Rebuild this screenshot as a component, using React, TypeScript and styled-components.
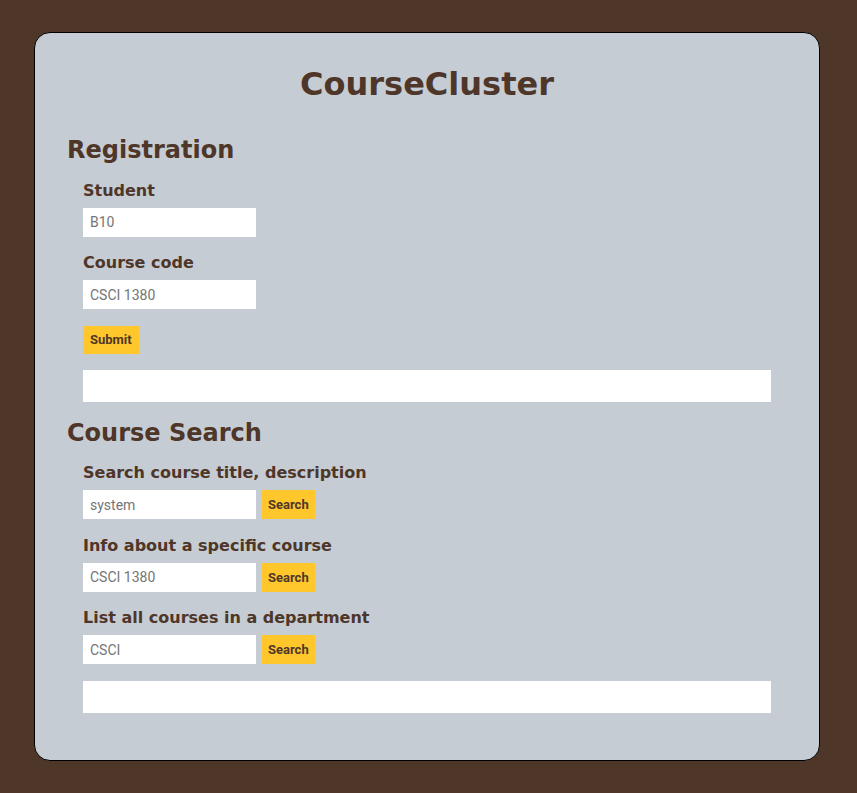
import React, { FunctionComponent } from 'react';
import styled, { createGlobalStyle } from 'styled-components';

const GlobalStyle = createGlobalStyle`
    body {
        margin: 0;
        background: #4e3629;
        font-family: 'DejaVu Sans', sans-serif;
        color: #4e3629;
    }
`;

const Card = styled.main`
    margin: 32px 37px 32px 34px;
    padding: 32px 32px 47px 32px;
    background: #c6ccd3;
    border: 1px solid #000;
    border-radius: 16px;
`;

const Title = styled.h1`
    margin: 0;
    font-size: 32px;
    font-weight: 700;
    line-height: normal;
    text-align: center;
`;

const SectionTitle = styled.h2<{ $top: number }>`
    margin: ${(p) => p.$top}px 0 0;
    font-size: 24px;
    font-weight: 700;
    line-height: normal;
`;

const Section = styled.section`
    display: flex;
    flex-direction: column;
    padding: 0 16px;
`;

const Field = styled.div`
    display: flex;
    flex-direction: column;
    margin-top: 16.5px;
`;

const Label = styled.label`
    font-size: 16px;
    font-weight: 700;
    line-height: normal;
    margin-bottom: 8px;
`;

const Row = styled.div`
    display: flex;
    gap: 6px;
`;

const Input = styled.input`
    box-sizing: border-box;
    width: 173px;
    height: 29px;
    border: none;
    outline: none;
    padding: 0 7px;
    background: #fff;
    font-family: Roboto, sans-serif;
    font-size: 14px;
    color: #757575;

    &::placeholder {
        color: #757575;
    }
`;

const Button = styled.button`
    box-sizing: border-box;
    height: 29px;
    border: none;
    padding: 0 6px;
    background: #ffc72c;
    color: #4e3629;
    font-family: Roboto, sans-serif;
    font-size: 13px;
    font-weight: 700;
    cursor: pointer;
`;

const SubmitButton = styled(Button)`
    align-self: flex-start;
    height: 28px;
    padding: 0 7px;
    margin-top: 16.5px;
`;

const Result = styled.div`
    height: 32px;
    margin-top: 16.5px;
    background: #fff;
`;

type SearchField = {
    label: string;
    placeholder: string;
};

const searchFields: SearchField[] = [
    { label: 'Search course title, description', placeholder: 'system' },
    { label: 'Info about a specific course', placeholder: 'CSCI 1380' },
    { label: 'List all courses in a department', placeholder: 'CSCI' },
];

const App: FunctionComponent = () => {
    return (
        <>
            <GlobalStyle />
            <Card>
                <Title>CourseCluster</Title>

                <SectionTitle $top={33}>Registration</SectionTitle>
                <Section>
                    <Field>
                        <Label>Student</Label>
                        <Input placeholder='B10' />
                    </Field>
                    <Field>
                        <Label>Course code</Label>
                        <Input placeholder='CSCI 1380' />
                    </Field>
                    <SubmitButton>Submit</SubmitButton>
                    <Result />
                </Section>

                <SectionTitle $top={16.5}>Course Search</SectionTitle>
                <Section>
                    {searchFields.map((field) => (
                        <Field key={field.label}>
                            <Label>{field.label}</Label>
                            <Row>
                                <Input placeholder={field.placeholder} />
                                <Button>Search</Button>
                            </Row>
                        </Field>
                    ))}
                    <Result />
                </Section>
            </Card>
        </>
    );
};

export default App;
